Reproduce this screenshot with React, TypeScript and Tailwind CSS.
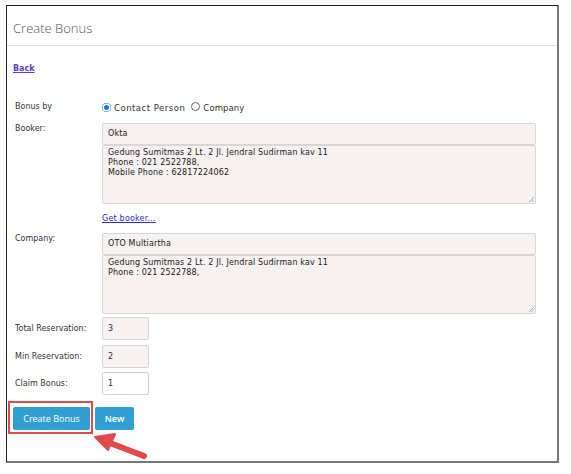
import React from "react";

const inputCls =
  "w-[434px] border border-[#d9d6d6] bg-[#f7f1f1] rounded-[2px] px-[5px] text-[#222] tracking-[0.15px]";

function Radio({ checked }: { checked?: boolean }) {
  return checked ? (
    <span className="inline-flex w-[9px] h-[9px] rounded-full bg-[#1a73e8] items-center justify-center">
      <span className="w-[5px] h-[5px] rounded-full bg-[#1a73e8] ring-[1.5px] ring-white" />
    </span>
  ) : (
    <span className="inline-block w-[9px] h-[9px] rounded-full border border-[#666] bg-white" />
  );
}

function Row({
  label,
  className = "",
  labelClass = "",
  children,
}: {
  label: string;
  className?: string;
  labelClass?: string;
  children: React.ReactNode;
}) {
  return (
    <div className={`flex ${className}`}>
      <div className={`w-[87px] shrink-0 ${labelClass}`}>{label}</div>
      <div>{children}</div>
    </div>
  );
}

export default function App() {
  return (
    <div className="relative w-[571px] h-[474px] bg-white pt-[5px] pl-[6px] font-['DejaVu_Sans',sans-serif] text-[8px] leading-[10px] text-[#333]">
      <div className="w-[553px] h-[458px] border-l border-t border-l-[#222] border-t-[#222] border-r-2 border-b-2 border-r-[#777] border-b-[#777]">
        {/* title */}
        <div className="h-[40px] pt-[12px] pl-[6px] border-b border-[#dcdcdc]">
          <div className="font-['Open_Sans',sans-serif] font-light text-[13px] leading-[20px] text-[#555]">
            Create Bonus
          </div>
        </div>

        <div className="pl-[6px] mt-[18px]">
          <a className="font-bold text-[#5a3fd0] underline">Back</a>
        </div>

        <div className="pl-[8px]">
          <Row label="Bonus by" className="mt-[28px]">
            <div className="flex items-center text-[8.5px]">
              <Radio checked />
              <span className="ml-[3px] tracking-[0.5px]">Contact Person</span>
              <span className="ml-[6px]">
                <Radio />
              </span>
              <span className="ml-[3px] tracking-[0.1px]">Company</span>
            </div>
          </Row>

          <Row label="Booker:" className="mt-[10px]" labelClass="pt-[1px]">
            <div className={`${inputCls} h-[22px] flex items-center`}>Okta</div>
            <div className={`${inputCls} relative h-[59px] pt-[2px]`}>
              <div>Gedung Sumitmas 2 Lt. 2 Jl. Jendral Sudirman kav 11</div>
              <div>Phone : 021 2522788,</div>
              <div>Mobile Phone : 62817224062</div>
              <svg className="absolute right-[1px] bottom-[1px]" width="6" height="6" viewBox="0 0 6 6">
                <path d="M1 6 L6 1 M3.5 6 L6 3.5" stroke="#999" strokeWidth="0.8" />
              </svg>
            </div>
            <a className="block mt-[10px] text-[#2a2ae0] underline tracking-[0.2px]">Get booker...</a>
          </Row>

          <Row label="Company:" className="mt-[9px]" labelClass="pt-[1px]">
            <div className={`${inputCls} h-[22px] flex items-center`}>OTO Multiartha</div>
            <div className={`${inputCls} relative h-[59px] pt-[2px]`}>
              <div>Gedung Sumitmas 2 Lt. 2 Jl. Jendral Sudirman kav 11</div>
              <div>Phone : 021 2522788,</div>
              <svg className="absolute right-[1px] bottom-[1px]" width="6" height="6" viewBox="0 0 6 6">
                <path d="M1 6 L6 1 M3.5 6 L6 3.5" stroke="#999" strokeWidth="0.8" />
              </svg>
            </div>
          </Row>

          <Row label="Total Reservation:" className="mt-[3px] items-center">
            <div className="w-[47px] h-[23px] border border-[#d9d6d6] bg-[#f7f1f1] rounded-[2px] px-[5px] flex items-center">3</div>
          </Row>
          <Row label="Min Reservation:" className="mt-[5px] items-center">
            <div className="w-[47px] h-[23px] border border-[#d9d6d6] bg-[#f7f1f1] rounded-[2px] px-[5px] flex items-center">2</div>
          </Row>
          <Row label="Claim Bonus:" className="mt-[4px] items-center">
            <div className="w-[47px] h-[23px] border border-[#cfcfcf] bg-white rounded-[2px] px-[5px] flex items-center">1</div>
          </Row>
        </div>

        <div className="flex gap-[5px] pl-[6px] mt-[12px] font-['Open_Sans',sans-serif]">
          <button className="w-[77px] h-[23px] rounded-[2px] bg-[#319fd3] text-white text-[9px]">
            Create Bonus
          </button>
          <button className="w-[39px] h-[23px] rounded-[2px] bg-[#319fd3] text-white text-[9px] font-semibold">
            New
          </button>
        </div>
      </div>

      {/* annotation overlay */}
      <div className="absolute left-[8px] top-[401px] w-[85px] h-[33px] border-2 border-[#e24a4a]" />
      <svg className="absolute left-[88px] top-[428px]" width="64" height="34" viewBox="0 0 64 34">
        <path d="M56 28 L22 15" stroke="#e24a4a" strokeWidth="6" strokeLinecap="round" />
        <path d="M7 9 L27 6 L20 22 Z" fill="#e24a4a" stroke="#e24a4a" strokeWidth="2" strokeLinejoin="round" />
      </svg>
    </div>
  );
}
